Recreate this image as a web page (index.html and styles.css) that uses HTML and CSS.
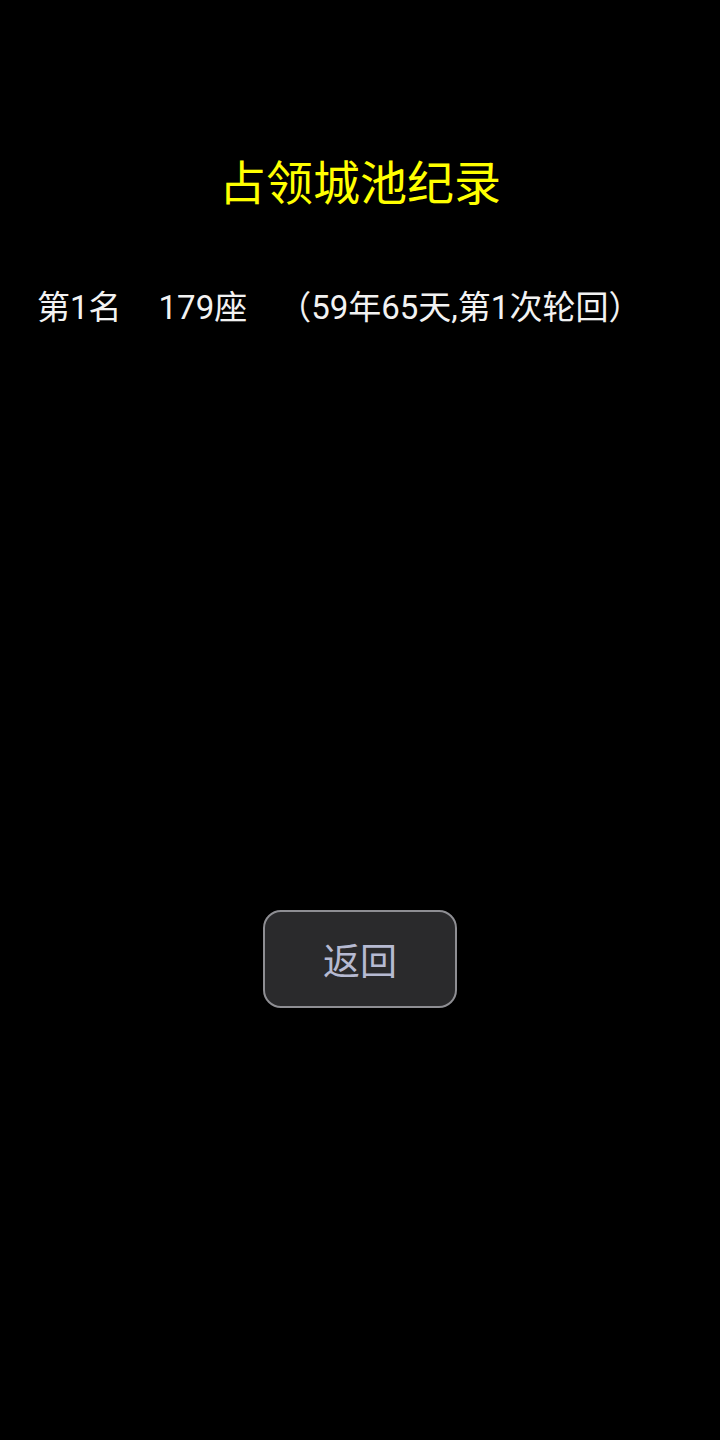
FILE: index.html
```html
<!DOCTYPE html>
<html lang="zh">
<head>
<meta charset="utf-8">
<link rel="stylesheet" href="styles.css">
</head>
<body>
<main class="page">
  <h1 class="title">占领城池纪录</h1>
  <div class="record">
    <span class="rank">第1名</span>
    <span class="count">179座</span>
    <span class="detail">（59年65天,第1次轮回）</span>
  </div>
  <div class="actions">
    <button class="back">返回</button>
  </div>
</main>
</body>
</html>
```
FILE: styles.css
```css
html, body {
  margin: 0;
  padding: 0;
  background: #000;
}
body {
  width: 720px;
  height: 1440px;
  font-family: Roboto, "Noto Sans CJK SC", sans-serif;
  color: #fff;
}
.page {
  display: flex;
  flex-direction: column;
  padding-top: 156px;
}
.title {
  margin: 0;
  font-size: 47px;
  line-height: 55px;
  font-weight: 400;
  color: #ffff00;
  text-align: center;
}
.record {
  display: flex;
  margin-top: 77px;
  padding-left: 37px;
  font-size: 33px;
  line-height: 40px;
  color: #f2f2f2;
}
.count {
  margin-left: 37px;
}
.detail {
  margin-left: 31px;
}
.actions {
  display: flex;
  justify-content: center;
  margin-top: 582px;
}
.back {
  width: 194px;
  height: 98px;
  box-sizing: border-box;
  border: 2px solid #8e8e93;
  border-radius: 18px;
  background: #2a2a2c;
  color: #b6bad2;
  font-family: "Noto Sans CJK SC", sans-serif;
  font-size: 37px;
  padding: 0;
}
```
